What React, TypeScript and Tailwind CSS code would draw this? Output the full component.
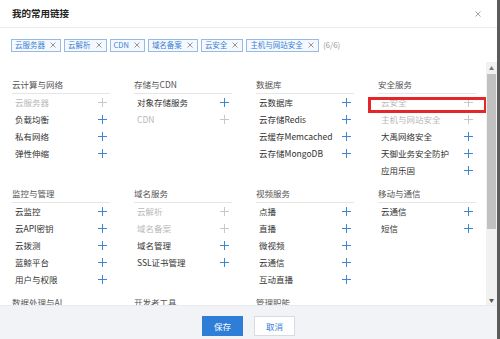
type Item = { name: string; off?: boolean };
type Section = { title: string; items: Item[] };

const sections: Section[] = [
  { title: "云计算与网络", items: [{ name: "云服务器", off: true }, { name: "负载均衡" }, { name: "私有网络" }, { name: "弹性伸缩" }] },
  { title: "存储与CDN", items: [{ name: "对象存储服务" }, { name: "CDN", off: true }] },
  { title: "数据库", items: [{ name: "云数据库" }, { name: "云存储Redis" }, { name: "云缓存Memcached" }, { name: "云存储MongoDB" }] },
  {
    title: "安全服务",
    items: [
      { name: "云安全", off: true },
      { name: "主机与网站安全", off: true },
      { name: "大禹网络安全" },
      { name: "天御业务安全防护" },
      { name: "应用乐固" },
    ],
  },
  { title: "监控与管理", items: [{ name: "云监控" }, { name: "云API密钥" }, { name: "云拨测" }, { name: "蓝鲸平台" }, { name: "用户与权限" }] },
  { title: "域名服务", items: [{ name: "云解析", off: true }, { name: "域名备案", off: true }, { name: "域名管理" }, { name: "SSL证书管理" }] },
  { title: "视频服务", items: [{ name: "点播" }, { name: "直播" }, { name: "微视频" }, { name: "云通信" }, { name: "互动直播" }] },
  { title: "移动与通信", items: [{ name: "云通信" }, { name: "短信" }] },
  { title: "数据处理与AI", items: [] },
  { title: "开发者工具", items: [] },
  { title: "管理职能", items: [] },
  { title: "", items: [] },
];

const tags = ["云服务器", "云解析", "CDN", "域名备案", "云安全", "主机与网站安全"];

function Cross({ className }: { className: string }) {
  return (
    <svg width="6" height="6" viewBox="0 0 6 6" className={className}>
      <path d="M0.5 0.5L5.5 5.5M5.5 0.5L0.5 5.5" stroke="currentColor" strokeWidth="0.9" />
    </svg>
  );
}

function Plus({ off }: { off?: boolean }) {
  return (
    <svg width="9" height="9" viewBox="0 0 9 9" className={off ? "text-[#c8c8c8]" : "text-[#3a86d8]"}>
      <path d="M4.5 0V9M0 4.5H9" stroke="currentColor" strokeWidth="1" />
    </svg>
  );
}

export default function App() {
  return (
    <div
      className="relative flex w-[500px] h-[339px] overflow-hidden bg-white text-[#333]"
      style={{ fontFamily: '"Noto Sans CJK SC", "Noto Sans", sans-serif' }}
    >
      <div className="flex flex-col flex-1 min-w-0">
        {/* header */}
        <div className="flex items-center justify-between h-[28px] pl-[12px] pr-[16px] border-b border-[#ececec] shrink-0">
          <span className="text-[9.5px] font-bold text-[#222]">我的常用链接</span>
          <Cross className="text-[#999]" />
        </div>

        {/* selected tags */}
        <div className="flex items-center gap-[3px] h-[34px] pl-[11px] shrink-0">
          {tags.map((t) => (
            <div
              key={t}
              className="flex items-center h-[13px] pl-[3px] pr-[4px] gap-[5px] border border-[#93bce9] bg-[#f5f9ff] text-[#3b7fd0] text-[7.5px] leading-none"
            >
              <span>{t}</span>
              <Cross className="text-[#8a8a8a]" />
            </div>
          ))}
          <span className="ml-[1px] text-[8px] text-[#999]">(6/6)</span>
        </div>

        {/* scrollable list */}
        <div className="flex flex-1 min-h-0">
          <div className="flex-1 overflow-hidden pl-[12px] pt-[15px]">
            <div className="grid grid-cols-[repeat(4,98px)] gap-x-[24px] gap-y-[7px]">
              {sections.map((s, i) => (
                <div key={i}>
                  {s.title && (
                    <div className="h-[17px] pb-[1px] leading-[15px] text-[8.5px] text-[#555] border-b border-[#e6e6e6]">
                      {s.title}
                    </div>
                  )}
                  {s.items.map((it, j) => (
                    <div key={j} className="relative flex items-center justify-between h-[17px] pl-[3px] pr-[3px]">
                      <span className={`text-[8.5px] ${it.off ? "text-[#b8b8b8]" : "text-[#333]"}`}>{it.name}</span>
                      <Plus off={it.off} />
                      {i === 3 && j === 0 && (
                        <div className="absolute -left-[10px] -right-[11px] top-[3px] h-[16px] border-[3px] border-[#e5252a]" />
                      )}
                    </div>
                  ))}
                </div>
              ))}
            </div>
          </div>

          {/* scrollbar */}
          <div className="flex flex-col items-center w-[11px] bg-[#f1f1f1] py-[2px]">
            <span className="text-[5px] leading-[7px] text-[#777]">▲</span>
            <div className="w-[9px] h-[155px] mt-[3px] bg-[#c1c1c1]" />
            <div className="flex-1" />
            <span className="text-[5px] leading-[7px] text-[#555]">▼</span>
          </div>
        </div>

        {/* footer */}
        <div className="flex justify-center items-start gap-[11px] h-[34px] pt-[10px] bg-[#f1f3f6] border-t border-[#e8eaee] shrink-0">
          <button className="w-[41px] h-[20px] bg-[#2e7dd6] text-white text-[8.5px]">保存</button>
          <button className="w-[41px] h-[20px] bg-white border border-[#d9dbe0] text-[#2e7dd6] text-[8.5px]">取消</button>
        </div>
      </div>
      <div className="w-[3px] bg-[#5b5b5b]" />
    </div>
  );
}
